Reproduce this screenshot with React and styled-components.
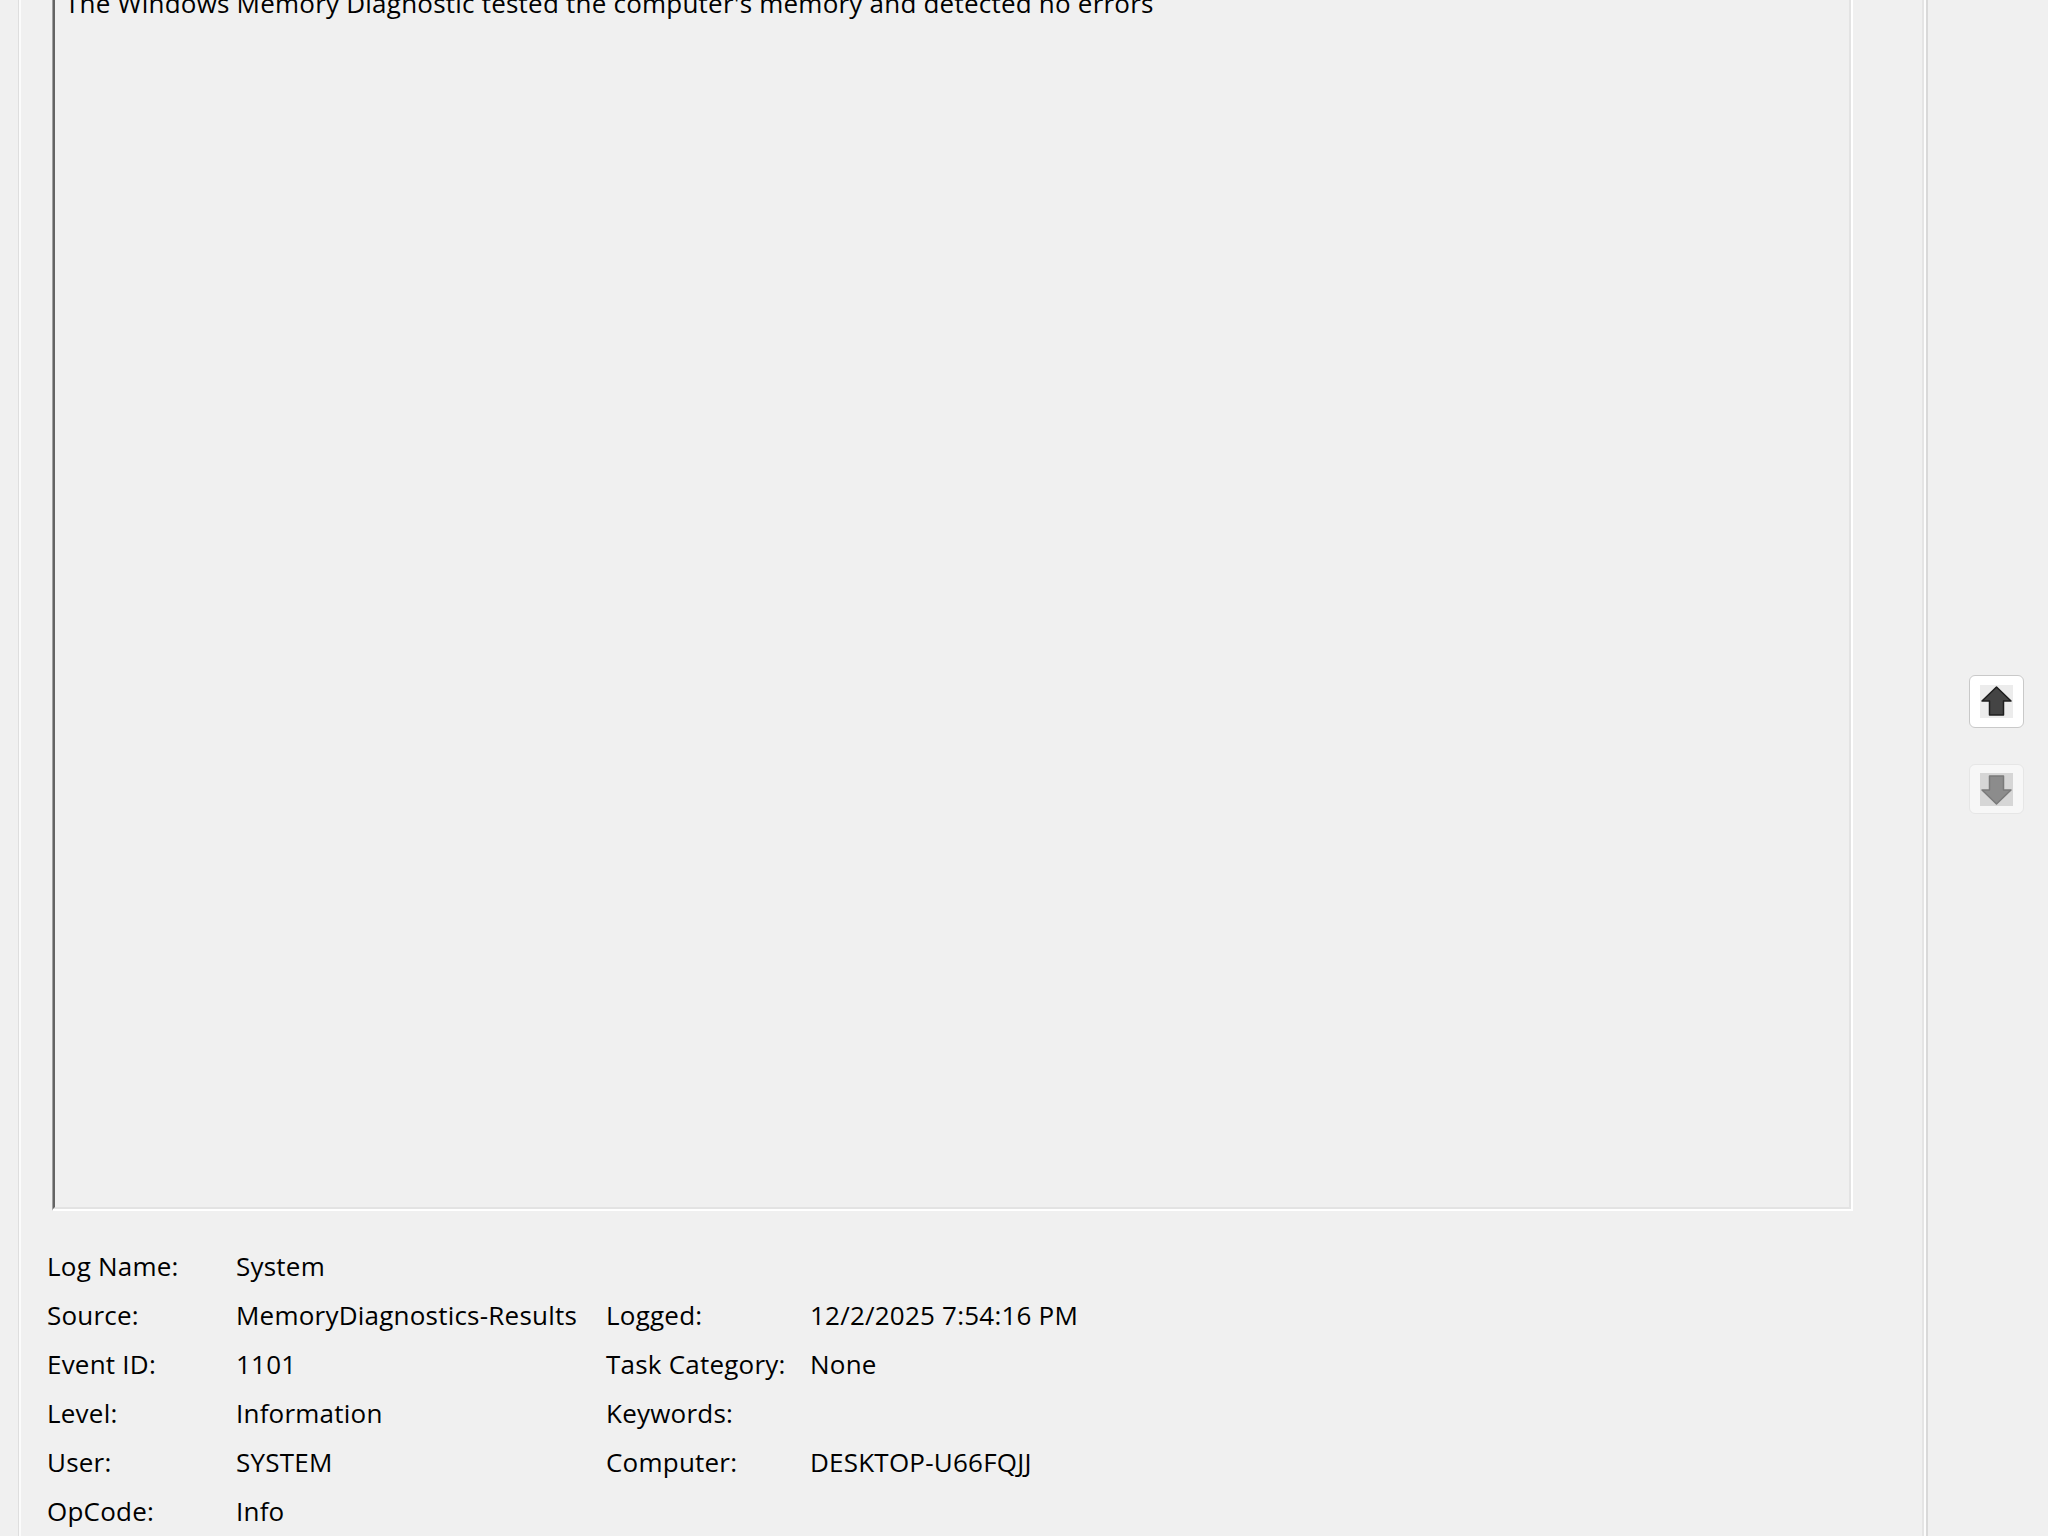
import React from 'react';
import styled, { createGlobalStyle } from 'styled-components';

const GlobalStyle = createGlobalStyle`
	html, body {
		margin: 0;
		padding: 0;
		background: #f0f0f0;
		overflow: hidden;
	}
`;

const Window = styled.div`
	display: flex;
	width: 2048px;
	height: 1536px;
	overflow: hidden;
	background: #f0f0f0;
	font-family: "Open Sans", "Noto Sans", sans-serif;
	font-size: 26px;
	letter-spacing: 0.22px;
	color: #000;
`;

const LeftPane = styled.div`
	flex: 0 0 1922px;
	display: flex;
	padding-left: 18px;
	box-sizing: border-box;
`;

const Sheet = styled.div`
	flex: 1;
	display: flex;
	flex-direction: column;
	align-items: flex-start;
	margin-top: -40px;
	padding-left: 28px;
	border-left: 1px solid #dedede;
	box-shadow: inset 2px 0 0 #fbfbfb;
`;

const TextFrame = styled.div`
	box-sizing: border-box;
	width: 1801px;
	height: 1261px;
	margin-left: 5px;
	border-style: solid;
	border-width: 1px 2px 2px 1px;
	border-color: #a0a0a0 #ffffff #ffffff #a0a0a0;
`;

const TextArea = styled.div`
	box-sizing: border-box;
	height: 100%;
	padding: 25px 10px;
	border-style: solid;
	border-width: 2px;
	border-color: #646464 #e3e3e3 #e3e3e3 #646464;
	line-height: 31px;
	white-space: nowrap;
`;

const Details = styled.div`
	display: grid;
	grid-template-columns: 189px 370px 204px 300px;
	grid-auto-rows: 49px;
	line-height: 49px;
	margin-top: 31px;
	white-space: nowrap;
`;

const Cell = styled.div`
	grid-column: ${p => p.col || 'auto'};
`;

const Splitter = styled.div`
	flex: 0 0 6px;
	box-sizing: border-box;
	border-left: 2px solid #e4e4e4;
	border-right: 2px solid #d9d9d9;
	background: #fcfcfc;
`;

const RightPane = styled.div`
	flex: 1;
	display: flex;
	flex-direction: column;
	align-items: flex-start;
	gap: 36px;
	padding: 675px 0 0 41px;
`;

const NavButton = styled.div`
	box-sizing: border-box;
	width: 55px;
	height: ${p => (p.disabled ? '50px' : '53px')};
	display: flex;
	align-items: center;
	justify-content: center;
	border: 1px solid ${p => (p.disabled ? '#e6e6e6' : '#c9c9c9')};
	border-radius: 6px;
	background: ${p => (p.disabled ? '#f7f7f7' : '#ffffff')};
`;

const IconTile = styled.div`
	width: 33px;
	height: 33px;
	display: flex;
	background: ${p => (p.disabled ? '#d6d6d6' : '#ececec')};
`;

const Arrow = ({ down, disabled }) => (
	<svg width="33" height="33" viewBox="0 0 33 33">
		<path
			d="M16.5 2 L31 16 L23.5 16 L23.5 30 L9.5 30 L9.5 16 L2 16 Z"
			transform={down ? 'rotate(180 16.5 16.5)' : undefined}
			fill={disabled ? '#8c8c8c' : '#444444'}
			stroke={disabled ? '#7a7a7a' : '#1e1e1e'}
			strokeWidth="1.5"
			strokeLinejoin="round"
		/>
	</svg>
);

const rows = [
	['Log Name:', 'System'],
	['Source:', 'MemoryDiagnostics-Results', 'Logged:', '12/2/2025 7:54:16 PM'],
	['Event ID:', '1101', 'Task Category:', 'None'],
	['Level:', 'Information', 'Keywords:', ''],
	['User:', 'SYSTEM', 'Computer:', 'DESKTOP-U66FQJJ'],
	['OpCode:', 'Info'],
];

const App = () => {
	return (
		<Window>
			<GlobalStyle />
			<LeftPane>
				<Sheet>
					<TextFrame>
						<TextArea>
							The Windows Memory Diagnostic tested the computer's memory and detected no errors
						</TextArea>
					</TextFrame>
					<Details>
						{rows.map((r, i) => (
							<React.Fragment key={i}>
								<Cell col={1}>{r[0]}</Cell>
								<Cell col={2}>{r[1]}</Cell>
								{r.length > 2 && <Cell col={3}>{r[2]}</Cell>}
								{r.length > 2 && <Cell col={4}>{r[3]}</Cell>}
							</React.Fragment>
						))}
					</Details>
				</Sheet>
			</LeftPane>
			<Splitter />
			<RightPane>
				<NavButton>
					<IconTile>
						<Arrow />
					</IconTile>
				</NavButton>
				<NavButton disabled>
					<IconTile disabled>
						<Arrow down disabled />
					</IconTile>
				</NavButton>
			</RightPane>
		</Window>
	);
};

export default App;
